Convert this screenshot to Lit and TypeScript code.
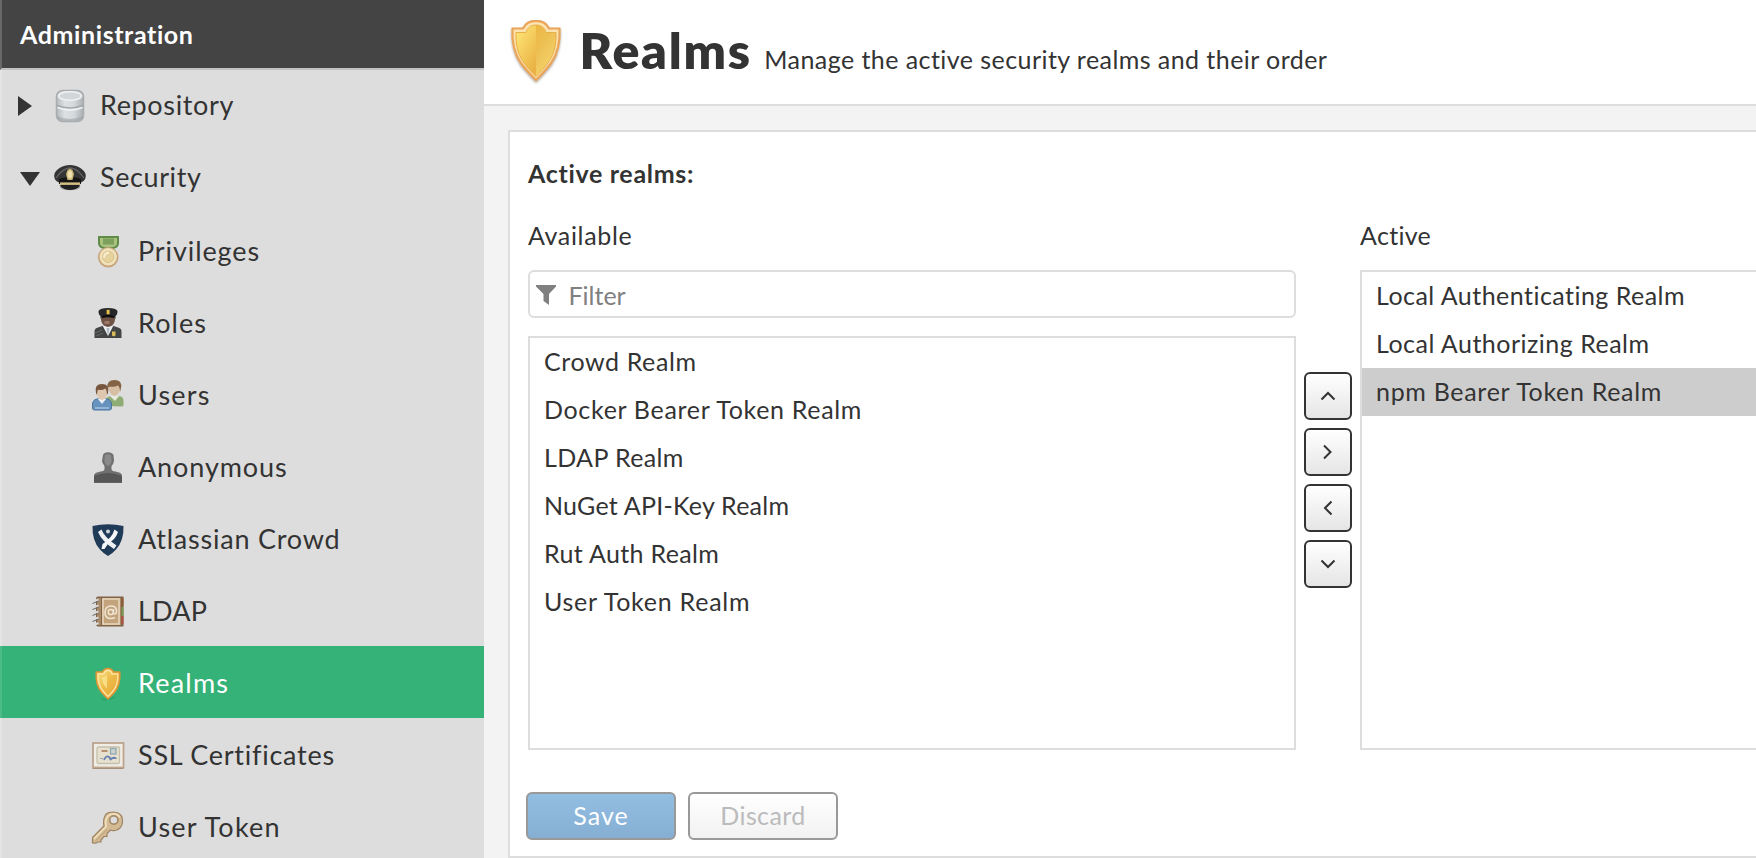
import { LitElement, html, css, svg, nothing } from "lit";
import { customElement, property } from "lit/decorators.js";
import { classMap } from "lit/directives/class-map.js";
import { styleMap } from "lit/directives/style-map.js";

interface Label { text: string; track: number }
interface NavItem extends Label { icon: string; level: number; arrow?: "right" | "down"; active?: boolean }

const NAV: NavItem[] = [
  { text: "Repository", track: 0.64, icon: "database", level: 0, arrow: "right" },
  { text: "Security", track: 0.6, icon: "cap", level: 0, arrow: "down" },
  { text: "Privileges", track: 0.9, icon: "medal", level: 1 },
  { text: "Roles", track: 1.1, icon: "officer", level: 1 },
  { text: "Users", track: 1.2, icon: "users", level: 1 },
  { text: "Anonymous", track: 0.9, icon: "silhouette", level: 1 },
  { text: "Atlassian Crowd", track: 0.78, icon: "crowd", level: 1 },
  { text: "LDAP", track: 0.2, icon: "book", level: 1 },
  { text: "Realms", track: 1.2, icon: "shieldSmall", level: 1, active: true },
  { text: "SSL Certificates", track: 0.75, icon: "certificate", level: 1 },
  { text: "User Token", track: 1.2, icon: "key", level: 1 },
];

const AVAILABLE: Label[] = [
  { text: "Crowd Realm", track: 0.6 },
  { text: "Docker Bearer Token Realm", track: 0.68 },
  { text: "LDAP Realm", track: 0.38 },
  { text: "NuGet API-Key Realm", track: 0.24 },
  { text: "Rut Auth Realm", track: 0.34 },
  { text: "User Token Realm", track: 0.74 },
];

const ACTIVE: Label[] = [
  { text: "Local Authenticating Realm", track: 0.47 },
  { text: "Local Authorizing Realm", track: 0.49 },
  { text: "npm Bearer Token Realm", track: 0.69 },
];

const label = (l: Label) => html`<span style=${styleMap({ letterSpacing: `${l.track}px` })}>${l.text}</span>`;

const ICONS: Record<string, unknown> = {
  database: svg`
    <defs><linearGradient id="g" x2="1"><stop stop-color="#b5babd"/><stop offset=".3" stop-color="#dde0e3"/><stop offset=".65" stop-color="#d5d9dc"/><stop offset="1" stop-color="#a9aeb2"/></linearGradient></defs>
    <rect x="2.500" y=".5" width="27" height="31" rx="6" fill="url(#g)" stroke="#a9adaf" stroke-width="1.500"/>
    <path d="M3 26q13 6 26 0v2q-2 3-7 3H10q-5 0-7-3z" fill="#9da2a5" opacity=".6"/>
    <ellipse cx="16" cy="6" rx="11.500" ry="4.200" fill="#d3d6d8" stroke="#eff1f2" stroke-width="1.600"/>
    <path d="M3 15.500q13 5 26 0" fill="none" stroke="#a4a9ac" stroke-width="1.600"/>
    <path d="M3.500 17.500q12.500 5 25 0" fill="none" stroke="#eff1f3" stroke-width="1.800"/>`,
  cap: svg`
    <ellipse cx="16" cy="25.500" rx="10" ry="2.800" fill="#777" opacity=".5"/>
    <path d="M16 3C8.500 3 3 7 .8 11-.8 15 1 19 5 20.500l3 5q8 3 16 0l3-5c4-1.500 5.800-5.500 4.200-9.500C29 7 23.500 3 16 3z" fill="#343434"/>
    <path d="M2 16Q9 6 16 6t14 10" fill="none" stroke="#626262" stroke-width="1.300"/>
    <path d="M5 17q11-4 22 0v5q-11-2-22 0z" fill="#151515"/>
    <path d="M5.500 23.500q10.500-2 21 0Q22 28 16 28T5.500 23.500z" fill="#202020"/>
    <path d="M6 20.400h20v2.500H6z" fill="#d3bf83"/>
    <path d="M13.500 8l2.500-1.500L18.500 8l1.500 4-1.500 6h-5L12 12z" fill="#c9b478"/><ellipse cx="16" cy="12.500" rx="2.300" ry="4" fill="#eee0ad"/>`,
  medal: svg`
    <path d="M6 0h21v7q0 5-6 6h-9Q6 12 6 7z" fill="#5f8a48"/>
    <path d="M8 2h17v5q0 3-4 4h-9Q8 10 8 7z" fill="#a9c37f"/><path d="M11 2.500h11v6H11z" fill="#7d9f5c"/>
    <circle cx="16.200" cy="21.300" r="10.300" fill="#c8a57c"/><circle cx="16.200" cy="20.800" r="8.700" fill="#f0e2bb"/>
    <circle cx="16.200" cy="20.800" r="5.700" fill="#e4d19c" stroke="#dcc38f" stroke-width="1"/>
    <path d="M12 22q0-5 5-5.500" fill="none" stroke="#f8efd2" stroke-width="1.800"/>`,
  officer: svg`
    <path d="M2.500 30v-7q0-3 5-4l6-2h5l6 2q5 1 5 4v7z" fill="#434545"/>
    <path d="M10.500 17.500h11L16 28z" fill="#eceeee"/><path d="M14.500 20h3l-1.500 8z" fill="#aeb8c2"/>
    <path d="M9 7h14v5q-1 6-7 7-6-1-7-7z" fill="#6e5345"/><path d="M12.500 13h5v3h-5z" fill="#9d7868"/>
    <path d="M6.500 3Q8 0 16 0t9.500 3q0 4-2 5v3q-1-2-2-2.500H10L8.500 11V8Q6.500 7 6.500 3z" fill="#262728"/>
    <path d="M10 8q6-2 12 0v2q-6-1.500-12 0z" fill="#0d0d0e"/><path d="M14.600 1.800h3v4.500h-3z" fill="#e2c04a"/>
    <path d="M3 25l7-3M4 28l7-3" stroke="#686a6a"/><path d="M20 23.500h3.500v4l-1.700 1-1.800-1z" fill="#d9bd58"/>`,
  users: svg`
    <path d="M14 26v-7q1-3 6-3h6q5 0 5.500 4v5q0 1.500-2 1.500z" fill="#8fac74"/><path d="M18 16h9l-4 5z" fill="#e7ebdd"/>
    <path d="M17 5q0-4.500 5-4.500t6 4.500v5q-1.500 5-5.500 6-4-1-5.500-6z" fill="#d8bea3"/>
    <path d="M15.500 8Q14.500 0 22.500 0t6.500 8l-1 4q0-5-2-6.500-4 2-8 1z" fill="#846445"/>
    <path d="M.5 28v-5q1-4 6-4.500h7q5 .5 6 4.500v5q0 2-2 2h-15q-2 0-2-2z" fill="#6792bd" stroke="#4c75a1"/>
    <path d="M5.500 18.500h9L10 24z" fill="#edf1f5"/><path d="M3 28h14" stroke="#a5c2df" stroke-width="1.500"/>
    <path d="M5 9h10v5q-1 5-5 6-4-1-5-6z" fill="#dfc7af"/>
    <path d="M4 13Q2 4 10 4t6 9l-1 2q0-4.500-1.500-6.500Q9 11 6 9.500 5 12 5 15z" fill="#76573e"/>`,
  silhouette: svg`
    <path d="M11 3q1-2.800 5-2.800T21.500 3l.5 6q-.5 3-2.500 5v3q0 2 4 2.500 6.500 1 6.500 4v7.300H2V23.500q0-3 6.500-4 4-.5 4-2.500v-3Q10 11 10 9z" fill="#707070"/>
    <path d="M13 3q3-1.500 6 0l.7 6q-1 4-3.700 5-2.700-1-3.700-5z" fill="#8a8a8a"/>
    <path d="M2 24q14-6 28 0v6.800H2z" fill="#565656"/>`,
  crowd: svg`
    <path d="M.5 2Q16-1.500 31.500 2q.5 15-7.500 23.500Q20 30 16 32q-4-2-8-6.500Q0 17 .5 2z" fill="#203b58"/>
    <path d="M6 8l3.500-2.500Q12 13 24.500 21.500L22 25Q10 17.500 6 8z" fill="#eef0f2"/>
    <path d="M22.500 5.500L26 8q-2.500 7.500-9.500 11l-4 6h-3l1-5Q20 14 22.500 5.500z" fill="#f6f7f8"/>
    <circle cx="16" cy="7.500" r="2" fill="#cfd6dc"/>`,
  book: svg`
    <path d="M6 .5h25.500v30H6q-2 0-2-2v-26q0-2 2-2z" fill="#816347"/>
    <path d="M29.500 2h2v8h-2z" fill="#8f5c37"/><path d="M29.500 11h2v9h-2z" fill="#799b51"/><path d="M29.500 20h2v8h-2z" fill="#b0503e"/>
    <path d="M5 2h4v27H5z" fill="#a68a69"/><path d="M10 2h18.500v27H10z" fill="#c8aa84"/>
    <rect x="11" y="3" width="16" height="25" fill="#c3a37c" stroke="#ecdec8" stroke-width="1.300"/>
    <g fill="none" stroke="#f0e5d4" stroke-width="1.500"><circle cx="18.800" cy="16" r="2.600"/><path d="M21.500 13v4.500q3 1.500 3-2.500 0-5-5.500-5t-6 6 5.500 6.500q2.500 0 4.500-1"/></g>
    <g stroke="#dedede" stroke-width="2"><path d="M.5 6l6-2.500M.5 12l6-2.500M.5 18l6-2.500M.5 24l6-2.500M.5 29.500l6-2.500"/></g>
    <g stroke="#6c655f" stroke-width="1"><path d="M.5 7.500l6-2.500M.5 13.500l6-2.500M.5 19.500l6-2.500M.5 25.500l6-2.500"/></g>`,
  shieldSmall: svg`
    <defs><linearGradient id="s" x2="1" y2="1"><stop stop-color="#f8e68a"/><stop offset=".5" stop-color="#edb946"/><stop offset="1" stop-color="#e5a339"/></linearGradient></defs>
    <path d="M9.500 31q6 2 13-2" stroke="#178151" stroke-width="1.500" fill="none" opacity=".3"/>
    <path d="M16 .5q4 0 5.500 3.500h6.300q1 13-5.500 20.500Q18 29 16 31q-2-2-6.300-6.500Q3.200 17 4.200 4h6.300Q12 .5 16 .5z" fill="url(#s)" stroke="#dc9438" stroke-width="1.500"/>
    <path d="M16 2.500q3 0 4 3.500h5.700q.8 11-5 17.500-3 3.500-4.700 5-1.700-1.500-4.700-5Q5.500 17 6.300 6H12q1-3.500 4-3.500z" fill="none" stroke="#ffe4a0" stroke-width="1.400"/>
    <path d="M9.500 9.500q3.500 0 5.500-3v14q-4-3-5.500-11z" fill="#f9e794" opacity=".75"/>`,
  certificate: svg`
    <rect x="1" y="3" width="30.500" height="24.500" fill="#f0ede7" stroke="#bda48d" stroke-width="1.800"/>
    <path d="M.5 28.500h31" stroke="#a4917f"/>
    <rect x="5" y="7" width="22.500" height="16.500" rx="1.500" fill="#e7e0ce" stroke="#c4c0ac" stroke-width="1.300"/>
    <path d="M9.500 11h6" stroke="#b28f6e" stroke-width="2"/><rect x="18.500" y="8.500" width="5.500" height="5.500" fill="#ccd3ce" stroke="#8faab1" stroke-width="1.300"/>
    <path d="M8 18.500h3M20 18.500h5" stroke="#97a2b0"/><path d="M12 20q2-5 5-3 2 2 1 3 2-3 6-2" fill="none" stroke="#657fb2" stroke-width="1.800"/>`,
  key: svg`
    <path fill-rule="evenodd" d="M14 2q4-3 11-1.500Q31 2.500 30.500 10 30 17 23 18.500q-3 .5-4.500-.5L15 21.500v3h-3L9 28v2H5.500L4 31.200.5 31v-5.500L12 14q-1.500-7 2-12zm7.800 2a4 4 0 100 8 4 4 0 000-8z" fill="#d3ba92" stroke="#9d8262" stroke-width="1.200"/>
    <path d="M2 27L14 14.500Q12 5 19 2.300q6-1.300 9 3.200" fill="none" stroke="#efdfbd" stroke-width="1.800"/>
    <circle cx="21.800" cy="8" r="4.300" fill="none" stroke="#a68c6a" stroke-width="1.200"/>
    <path d="M4 28.500l11-11" stroke="#b89c76" stroke-width="1"/>`,
};

@customElement("ui-icon")
class UiIcon extends LitElement {
  @property() name = "";
  static styles = css`
    :host { display: block; flex: none; width: 32px; height: 32px; }
    svg { display: block; width: 100%; height: 100%; overflow: visible; }
  `;
  render() {
    return html`<svg viewBox="0 0 32 32">${ICONS[this.name] ?? nothing}</svg>`;
  }
}

@customElement("realm-list")
class RealmList extends LitElement {
  @property({ attribute: false }) items: Label[] = [];
  @property({ type: Number }) selected = -1;
  static styles = css`
    :host { display: block; flex: 1; box-sizing: border-box; border: 2px solid #ddd; background: #fff; }
    .row { height: 48px; line-height: 46px; padding-left: 14px; white-space: nowrap; }
    .selected { background: #cdcdcd; }
  `;
  render() {
    return this.items.map((item, i) => html`<div class=${classMap({ row: true, selected: i === this.selected })}>${label(item)}</div>`);
  }
}

@customElement("app-root")
class AppRoot extends LitElement {
  static styles = css`
    :host { display: flex; width: 100%; height: 858px; overflow: hidden; background: #f3f3f3; color: #333; font-family: Lato, "Open Sans", sans-serif; font-size: 25px; font-variant-ligatures: none; }
    * { box-sizing: border-box; }
    .sidebar { flex: none; width: 484px; height: 858px; overflow: hidden; background: #ddd; }
    .side-title { height: 70px; padding-left: 18px; border-left: 2px solid #686868; border-bottom: 2px solid #c3c3c3; background: #444; color: #fff; font-weight: 700; line-height: 69px; letter-spacing: .6px; }
    .nav { display: flex; align-items: center; height: 72px; border-left: 2px solid #e4e4e4; font-size: 27px; white-space: nowrap; }
    .nav .text { line-height: 33px; }
    .top { padding-left: 16px; }
    .top .toggle { flex: none; width: 36px; height: 24px; }
    .top .text { padding: 0 0 4px 14px; }
    .child { padding-left: 90px; }
    .child ui-icon { margin-top: 4px; }
    .child .text { padding-left: 14px; }
    .current { background: #34b277; color: #fff; border-left-color: #4bbb87; }
    .main { flex: 1; min-width: 0; display: flex; flex-direction: column; }
    .header { display: flex; height: 106px; background: #fff; border-bottom: 2px solid #ddd; white-space: nowrap; }
    .header svg { flex: none; width: 64px; height: 64px; margin: 20px 0 0 20px; }
    .heading { display: flex; align-items: baseline; height: 70px; padding: 18px 0 0 11.5px; }
    h1 { margin: 0; font-size: 50px; line-height: 64px; font-weight: 800; letter-spacing: 1.75px; }
    .subtitle { margin-left: 12.5px; letter-spacing: .44px; }
    .panel { width: 1300px; height: 728px; margin: 24px 0 0 24px; padding: 24px 18px 0; background: #fff; border: 2px solid #ddd; }
    .legend { height: 62px; font-weight: 700; line-height: 34px; letter-spacing: .68px; }
    .transfer { display: flex; height: 532px; }
    .column { flex: none; display: flex; flex-direction: column; width: 768px; }
    .caption { flex: none; height: 52px; line-height: 34px; }
    .filter { flex: none; display: flex; align-items: center; height: 48px; margin-bottom: 18px; padding-left: 6px; border: 2px solid #ddd; border-radius: 6px; color: #808080; }
    .filter svg { width: 20px; height: 20px; margin: 2px 12.5px 0 0; }
    .filter .text { padding-top: 1px; letter-spacing: 0; }
    .movers { flex: none; display: flex; flex-direction: column; gap: 8px; width: 64px; padding: 154px 8px 0; }
    .mover { display: flex; align-items: center; justify-content: center; flex: none; height: 48px; padding: 0; border: 2px solid #333; border-radius: 6px; background: linear-gradient(#fff, #e5e5e5); }
    .mover svg { width: 16px; height: 16px; }
    .actions { display: flex; gap: 12px; margin: 42px 0 0 -2px; }
    .action { width: 150px; height: 48px; padding: 0 0 3px; border: 2px solid #999; border-radius: 6px; font: inherit; }
    .save { background: linear-gradient(#92bee2, #86aed3); color: #fff; letter-spacing: 1px; }
    .discard { background: linear-gradient(#fff, #f2f2f2); color: #bbb; letter-spacing: .4px; }
  `;

  private mover(d: string) {
    return html`<button class="mover"><svg viewBox="0 0 16 16"><path d=${d} fill="none" stroke="#333" stroke-width="2" /></svg></button>`;
  }

  private navRow(item: NavItem) {
    const cls = classMap({ nav: true, top: item.level === 0, child: item.level === 1, current: !!item.active });
    const arrow = item.arrow === "right" ? "M0 2v20l14-10z" : "M2 6h20l-10 14z";
    return html`<div class=${cls}>
      ${item.arrow ? html`<svg class="toggle" viewBox="0 0 36 24"><path d=${arrow} fill="#333" /></svg>` : nothing}
      <ui-icon name=${item.icon}></ui-icon><div class="text">${label(item)}</div>
    </div>`;
  }

  render() {
    return html`
      <nav class="sidebar"><div class="side-title">Administration</div>${NAV.map((n) => this.navRow(n))}</nav>
      <main class="main">
        <header class="header">
          <svg viewBox="0 0 64 64">
            <defs>
              <linearGradient id="l" x2=".7" y2="1"><stop stop-color="#ffe978" /><stop offset="1" stop-color="#eab244" /></linearGradient>
              <linearGradient id="r" x2=".6" y2="1"><stop stop-color="#ecb744" /><stop offset=".4" stop-color="#edbf52" /><stop offset="1" stop-color="#f4d670" /></linearGradient>
              <filter id="f" x="-20%" y="-20%" width="140%" height="140%"><feDropShadow dx="0" dy="1.5" stdDeviation="1.2" flood-color="#504030" flood-opacity=".5" /></filter>
            </defs>
            <path filter="url(#f)" d="M32 .8c6 0 10.500 2.200 13 7.700h10.500c.8 13-1.500 24-8 34-5 7-11 13-15.500 17.500-4.500-4.500-10.500-10.500-15.500-17.500-6.500-10-8.800-21-8-34H19c2.500-5.500 7-7.700 13-7.700z" fill="#fde3b0" stroke="#e9a55a" stroke-width="2.200" />
            <path d="M32 5c-5 0-8.500 2.500-10 7.500H12C11.500 25 14 34 19 41.500c4 6 9 11 13 15z" fill="url(#l)" />
            <path d="M32 5c5 0 8.500 2.500 10 7.500h10c.5 12.500-2 21.500-7 29-4 6-9 11-13 15z" fill="url(#r)" />
            <path d="M32 5c5 0 8.500 2.500 10 7.500h10c.5 12.500-2 21.500-7 29-4 6-9 11-13 15-4-4-9-9-13-15-5-7.500-7.500-16.500-7-29h10C23.500 7.500 27 5 32 5z" fill="none" stroke="#e8b04a" stroke-width="1" />
          </svg>
          <div class="heading"><h1>Realms</h1><div class="subtitle">Manage the active security realms and their order</div></div>
        </header>
        <section class="panel">
          <div class="legend">Active realms:</div>
          <div class="transfer">
            <div class="column">
              <div class="caption">${label({ text: "Available", track: 0.66 })}</div>
              <div class="filter"><svg viewBox="0 0 20 20"><path d="M0 0h20v1.500L13 9v11l-5.500-4V9L0 1.500z" fill="#808080" /></svg><div class="text">Filter</div></div>
              <realm-list .items=${AVAILABLE}></realm-list>
            </div>
            <div class="movers">
              ${this.mover("M1.500 11.500L8 5l6.500 6.500")}${this.mover("M4 1.500L10.500 8 4 14.500")}${this.mover("M11.500 1.500L5 8l6.500 6.500")}${this.mover("M1.500 4.500L8 11l6.500-6.500")}
            </div>
            <div class="column">
              <div class="caption">${label({ text: "Active", track: 0.3 })}</div>
              <realm-list .items=${ACTIVE} .selected=${2}></realm-list>
            </div>
          </div>
          <div class="actions"><button class="action save">Save</button><button class="action discard">Discard</button></div>
        </section>
      </main>`;
  }
}
